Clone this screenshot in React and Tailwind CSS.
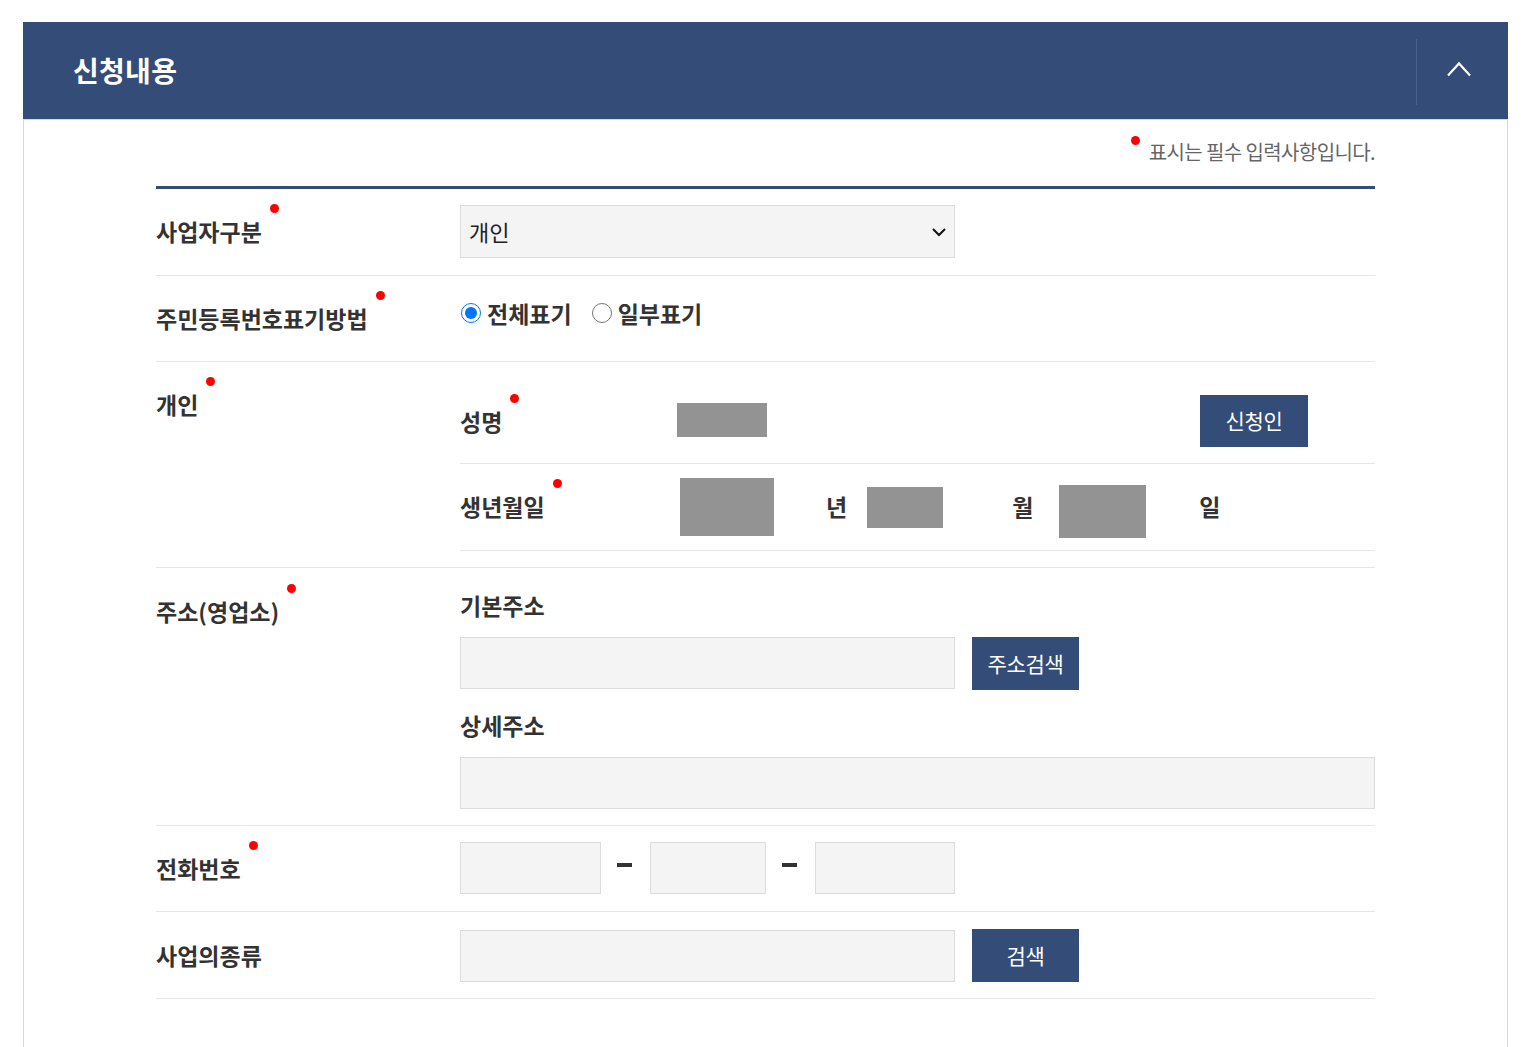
import React from "react";

function Req({ children, className = "" }) {
  return (
    <span className={"relative inline-block " + className}>
      {children}
      <span className="absolute left-full ml-[8px] top-[-11px] w-[9px] h-[9px] rounded-full bg-[#ff0000]" />
    </span>
  );
}

const labelCls = "text-[23px] leading-[33px] font-bold text-[#333]";
const inputCls = "h-[52px] bg-[#f4f4f4] border border-[#dcdcdc] outline-none";
const btnBase = "bg-[#344c78] text-white text-[21px] tracking-[-0.3px] flex items-center justify-center";

export default function App() {
  return (
    <div className="min-h-[1047px] bg-white font-['Noto_Sans_CJK_KR',sans-serif] pt-[22px] pl-[23px]">
      <div className="w-[1485px]">
        {/* Header */}
        <div className="h-[97px] bg-[#344c78] flex items-center justify-between">
          <h2 className="pl-[50px] text-white text-[28px] font-bold tracking-[0.3px] leading-none mt-[-2px]">신청내용</h2>
          <div className="h-[66px] w-[92px] border-l border-[#4b6190] flex items-center pl-[30px] mt-[3px]">
            <svg width="24" height="16" viewBox="0 0 24 16" className="mt-[-6px]">
              <path d="M1 14.5 L12 2.5 L23 14.5" fill="none" stroke="#fff" strokeWidth="2.2" />
            </svg>
          </div>
        </div>

        {/* Body */}
        <div className="border-x border-t border-[#d8d8d8] px-[132px] min-h-[930px]">
          <div className="flex justify-end pt-[17px] pb-[19px]">
            <span className="relative text-[20px] leading-[30px] tracking-[-0.6px] text-[#666]">
              <span className="absolute left-[-18px] top-[-1px] w-[9px] h-[9px] rounded-full bg-[#ff0000]" />
              표시는 필수 입력사항입니다.
            </span>
          </div>

          <div className="border-t-[3px] border-[#344c78]">
            {/* Row 1 */}
            <div className="flex items-center border-b border-[#e6e6e6] pt-[16px] pb-[17px]">
              <div className="w-[304px]"><Req className={labelCls}>사업자구분</Req></div>
              <div className="relative w-[495px]">
                <select className="appearance-none w-[495px] h-[53px] bg-[#f4f4f4] border border-[#dcdcdc] pl-[8px] text-[22px] text-[#222] outline-none">
                  <option>개인</option>
                </select>
                <svg width="16" height="10" viewBox="0 0 16 10" className="absolute right-[8px] top-[22px] pointer-events-none">
                  <path d="M2 2 L8 8 L14 2" fill="none" stroke="#111" strokeWidth="2" />
                </svg>
              </div>
            </div>

            {/* Row 2 */}
            <div className="flex items-center border-b border-[#e6e6e6] h-[86px]">
              <div className="w-[304px]"><Req className={labelCls}>주민등록번호표기방법</Req></div>
              <div className="flex items-center mb-[11px]">
                <label className="flex items-center">
                  <input type="radio" name="rrn" defaultChecked className="m-0 w-[20px] h-[20px] ml-[1px]" />
                  <span className={labelCls + " ml-[6px]"}>전체표기</span>
                </label>
                <label className="flex items-center ml-[20px]">
                  <input type="radio" name="rrn" className="m-0 w-[20px] h-[20px]" />
                  <span className={labelCls + " ml-[6px]"}>일부표기</span>
                </label>
              </div>
            </div>

            {/* Row 3 */}
            <div className="flex border-b border-[#e6e6e6] py-[16px]">
              <div className="w-[304px] pt-[10px]"><Req className={labelCls}>개인</Req></div>
              <div className="flex-1">
                <div className="flex items-center border-b border-[#e6e6e6] h-[86px] pt-[17px] pb-[16px]">
                  <div className="w-[217px]"><Req className={labelCls}>성명</Req></div>
                  <div className="w-[90px] h-[34px] bg-[#939393] mt-[-2px]" />
                  <div className="flex-1" />
                  <button className={btnBase + " h-[52px] w-[108px] mr-[67px]"}>신청인</button>
                </div>
                <div className="flex items-start border-b border-[#e6e6e6] h-[87px] pt-[14px]">
                  <div className="w-[217px] h-[33px] mt-[12px]"><Req className={labelCls}>생년월일</Req></div>
                  <div className="w-[94px] h-[58px] bg-[#939393] ml-[3px]" />
                  <span className={labelCls + " ml-[52px] mt-[12px]"}>년</span>
                  <div className="w-[76px] h-[41px] bg-[#939393] ml-[20px] mt-[9px]" />
                  <span className={labelCls + " ml-[69px] mt-[12px]"}>월</span>
                  <div className="w-[87px] h-[53px] bg-[#939393] ml-[26px] mt-[7px]" />
                  <span className={labelCls + " ml-[53px] mt-[12px]"}>일</span>
                </div>
              </div>
            </div>

            {/* Row 4 */}
            <div className="flex border-b border-[#e6e6e6] pt-[21px] pb-[16px]">
              <div className="w-[304px] pt-[6px]"><Req className={labelCls}>주소(영업소)</Req></div>
              <div className="flex-1">
                <div className={labelCls}>기본주소</div>
                <div className="flex items-start mt-[15px]">
                  <input className={inputCls + " w-[495px]"} />
                  <button className={btnBase + " h-[53px] w-[107px] ml-[17px]"}>주소검색</button>
                </div>
                <div className={labelCls + " mt-[19px]"}>상세주소</div>
                <input className={inputCls + " w-full mt-[15px] h-[51px]"} />
              </div>
            </div>

            {/* Row 5 */}
            <div className="flex items-center border-b border-[#e6e6e6] pt-[16px] pb-[17px]">
              <div className="w-[304px]"><Req className={labelCls}>전화번호</Req></div>
              <div className="flex items-center">
                <input className={inputCls + " w-[141px]"} />
                <div className="w-[15px] h-[4px] bg-[#333] ml-[16px] mr-[18px] mb-[6px]" />
                <input className={inputCls + " w-[116px]"} />
                <div className="w-[15px] h-[4px] bg-[#333] ml-[16px] mr-[18px] mb-[6px]" />
                <input className={inputCls + " w-[140px]"} />
              </div>
            </div>

            {/* Row 6 */}
            <div className="flex items-center border-b border-[#e6e6e6] pt-[17px] pb-[16px]">
              <div className="w-[304px]"><span className={labelCls}>사업의종류</span></div>
              <div className="flex items-center">
                <input className={inputCls + " w-[495px]"} />
                <button className={btnBase + " h-[53px] w-[107px] ml-[17px]"}>검색</button>
              </div>
            </div>
          </div>
        </div>
      </div>
    </div>
  );
}
